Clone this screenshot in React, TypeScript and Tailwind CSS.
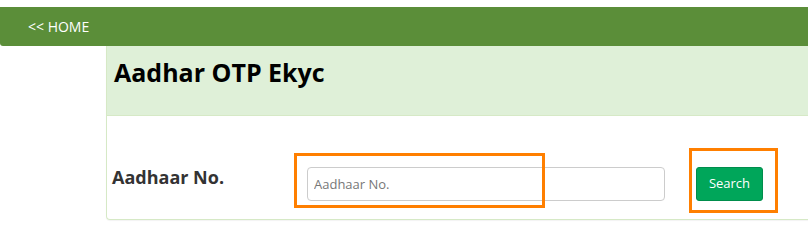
import React from 'react';

const font = { fontFamily: '"Open Sans", "Noto Sans", sans-serif' };

export default function App() {
  return (
    <div className="w-[808px] h-[233px] overflow-hidden bg-white" style={font}>
      <div className="pt-[7px]">
        <div className="h-[39px] bg-[#5b8e39] rounded-bl-[3px] flex items-center pl-[28px]">
          <a href="#" className="text-white text-[14px] leading-none">&lt;&lt; HOME</a>
        </div>
      </div>

      <div className="ml-[106px] w-[740px] border border-t-0 border-[#d6e9c6] rounded-b-[4px] shadow-[0_1px_1px_rgba(0,0,0,0.05)]">
        <div className="h-[70px] bg-[#dff0d8] border-b border-[#d6e9c6] pl-[7px] pt-[9px]">
          <h3 className="text-[25px] font-bold text-black leading-[34px]">Aadhar OTP Ekyc</h3>
        </div>

        <div className="relative pt-[51px] pb-[18px] pl-[5px] flex items-start">
          <label className="w-[195px] text-[18px] font-bold text-[#333] leading-[20px]">Aadhaar No.</label>
          <input
            type="text"
            placeholder="Aadhaar No."
            className="w-[358px] h-[34px] px-[6px] border border-[#ccc] rounded-[4px] text-[13px] text-[#555] placeholder:text-[#777] outline-none"
            style={font}
          />
          <button className="ml-[31px] w-[67px] h-[34px] bg-[#00a65a] border border-[#008d4c] rounded-[3px] text-white text-[13px]">
            Search
          </button>

          <div className="absolute left-[187px] top-[37px] w-[251px] h-[55px] border-[3px] border-[#ff7f00]" />
          <div className="absolute left-[582px] top-[32px] w-[89px] h-[65px] border-[3px] border-[#ff7f00]" />
        </div>
      </div>
    </div>
  );
}
